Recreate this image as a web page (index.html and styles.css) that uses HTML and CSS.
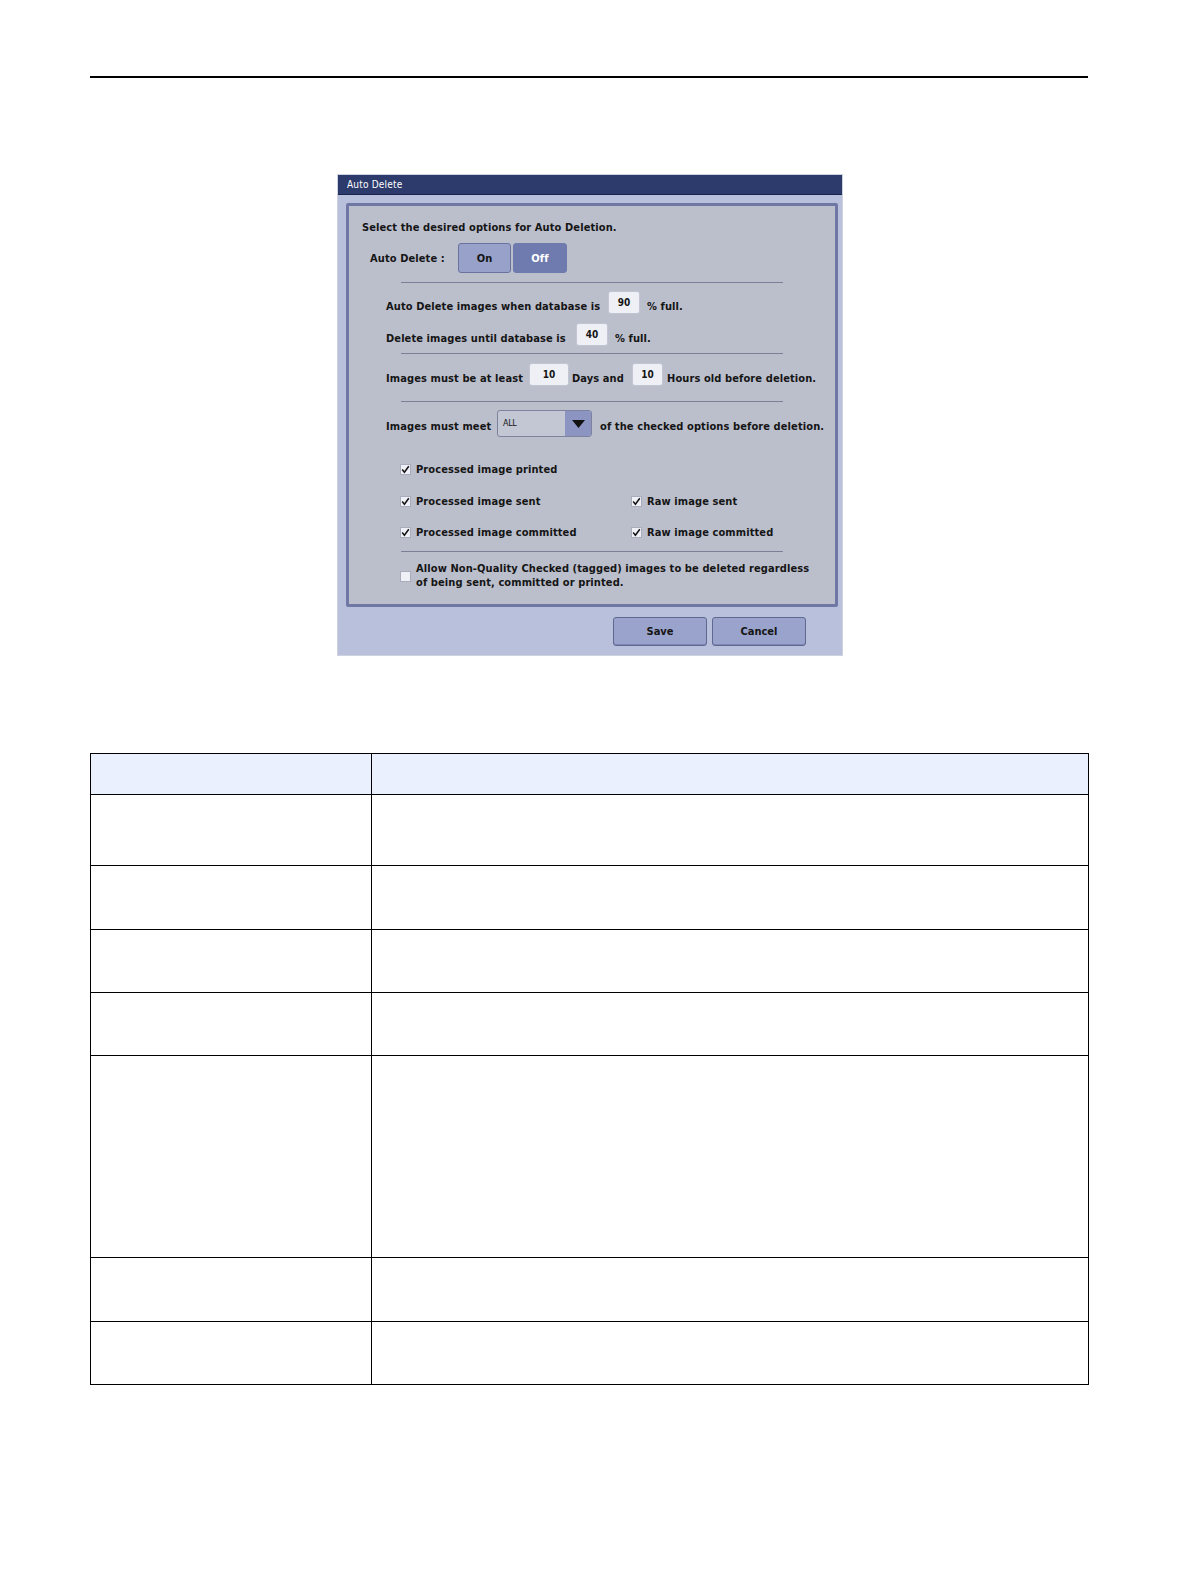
FILE: index.html
```html
<!DOCTYPE html>
<html>
<head>
<meta charset="utf-8">
<link rel="stylesheet" href="styles.css">
</head>
<body>
<div class="page">
  <div class="rule"></div>

  <div class="dialog">
    <div class="titlebar">Auto Delete</div>
    <div class="panel">
      <div class="row r-title"><span>Select the desired options for Auto Deletion.</span></div>
      <div class="row r-auto">
        <span class="lbl-auto">Auto Delete :</span>
        <div class="toggle">
          <span class="tbtn on">On</span>
          <span class="tbtn off">Off</span>
        </div>
      </div>
      <div class="sep s1"></div>
      <div class="row r-db1">
        <span class="lbl lbl-db1">Auto Delete images when database is</span>
        <span class="field f-db1">90</span>
        <span class="after">% full.</span>
      </div>
      <div class="row r-db2">
        <span class="lbl lbl-db2">Delete images until database is</span>
        <span class="field f-db2">40</span>
        <span class="after">% full.</span>
      </div>
      <div class="sep s2"></div>
      <div class="row r-age">
        <span class="lbl lbl-age">Images must be at least</span>
        <span class="field f-days">10</span>
        <span class="lbl lbl-days">Days and</span>
        <span class="field f-hours">10</span>
        <span class="after">Hours old before deletion.</span>
      </div>
      <div class="sep s3"></div>
      <div class="row r-meet">
        <span class="lbl lbl-meet">Images must meet</span>
        <span class="select"><span class="sel-val">ALL</span><span class="sel-arrow"><svg width="13" height="8" viewBox="0 0 13 8"><path d="M0 0H13L6.5 8Z" fill="#111"/></svg></span></span>
        <span class="after">of the checked options before deletion.</span>
      </div>
      <div class="row r-cb1">
        <span class="cbitem"><span class="cb"><svg width="9" height="9" viewBox="0 0 9 9"><path d="M1.2 4.6L3.4 7.2L7.8 1.2" fill="none" stroke="#111" stroke-width="1.5"/></svg></span>Processed image printed</span>
      </div>
      <div class="row r-cb2">
        <span class="cbitem c-left"><span class="cb"><svg width="9" height="9" viewBox="0 0 9 9"><path d="M1.2 4.6L3.4 7.2L7.8 1.2" fill="none" stroke="#111" stroke-width="1.5"/></svg></span>Processed image sent</span>
        <span class="cbitem"><span class="cb"><svg width="9" height="9" viewBox="0 0 9 9"><path d="M1.2 4.6L3.4 7.2L7.8 1.2" fill="none" stroke="#111" stroke-width="1.5"/></svg></span>Raw image sent</span>
      </div>
      <div class="row r-cb3">
        <span class="cbitem c-left"><span class="cb"><svg width="9" height="9" viewBox="0 0 9 9"><path d="M1.2 4.6L3.4 7.2L7.8 1.2" fill="none" stroke="#111" stroke-width="1.5"/></svg></span>Processed image committed</span>
        <span class="cbitem"><span class="cb"><svg width="9" height="9" viewBox="0 0 9 9"><path d="M1.2 4.6L3.4 7.2L7.8 1.2" fill="none" stroke="#111" stroke-width="1.5"/></svg></span>Raw image committed</span>
      </div>
      <div class="sep s4"></div>
      <div class="row r-allow">
        <span class="cb empty"></span>
        <span class="allow-text">Allow Non-Quality Checked (tagged) images to be deleted regardless<br>of being sent, committed or printed.</span>
      </div>
    </div>
    <div class="footer">
      <span class="btn">Save</span>
      <span class="btn">Cancel</span>
    </div>
  </div>

  <table class="grid">
    <tr class="head"><td class="c1"></td><td></td></tr>
    <tr class="h71"><td class="c1"></td><td></td></tr>
    <tr class="h64"><td class="c1"></td><td></td></tr>
    <tr class="h63"><td class="c1"></td><td></td></tr>
    <tr class="h63"><td class="c1"></td><td></td></tr>
    <tr class="h202"><td class="c1"></td><td></td></tr>
    <tr class="h64"><td class="c1"></td><td></td></tr>
    <tr class="h63"><td class="c1"></td><td></td></tr>
  </table>
</div>
</body>
</html>
```

FILE: styles.css
```css
html, body {
  margin: 0;
  padding: 0;
  background: #ffffff;
  overflow: hidden;
  width: 1190px;
  height: 1584px;
}

.page {
  width: 1190px;
  height: 1584px;
  box-sizing: border-box;
  overflow: hidden;
  padding-top: 76px;
  font-family: "DejaVu Sans Condensed", "DejaVu Sans", sans-serif;
  color: #151515;
}

.rule {
  margin-left: 90px;
  width: 998px;
  height: 2px;
  background: #000;
}

/* ---------- dialog ---------- */
.dialog {
  margin-top: 96px;
  margin-left: 337px;
  width: 506px;
  height: 482px;
  box-sizing: border-box;
  background: #b8c0dc;
  border: 1px solid #cfd3e0;
  display: flex;
  flex-direction: column;
}

.titlebar {
  height: 19px;
  background: #2c3a6c;
  border-bottom: 1px solid #1b2448;
  color: #ffffff;
  font-size: 10px;
  line-height: 19px;
  padding-left: 9px;
  letter-spacing: 0.2px;
}

.panel {
  margin-top: 8px;
  margin-left: 8px;
  width: 492px;
  height: 404px;
  box-sizing: border-box;
  border: 3px solid #6f78a4;
  border-radius: 2px;
  background: #bbbfcc;
  font-size: 11px;
  font-weight: bold;
  letter-spacing: 0.1px;
}

.row {
  display: flex;
  align-items: center;
  white-space: nowrap;
}

.r-title { height: 16px; margin-top: 13px; padding-left: 13px; }

.r-auto { height: 30px; margin-top: 8px; padding-left: 21px; }
.lbl-auto { width: 88px; }
.toggle { display: flex; gap: 2px; }
.tbtn {
  box-sizing: border-box;
  display: flex;
  align-items: center;
  justify-content: center;
  border-radius: 3px;
  font-size: 11px;
}
.tbtn.on {
  width: 53px;
  height: 30px;
  background: #97a1c9;
  border: 1px solid #6a739e;
}
.tbtn.off {
  width: 54px;
  height: 30px;
  background: #6f7bae;
  color: #ffffff;
  border: 1px solid #6f7bae;
}

.sep {
  height: 1px;
  margin-left: 52px;
  width: 382px;
  background: #7b8099;
}
.s1 { margin-top: 9px; }
.s2 { margin-top: 0; }
.s3 { margin-top: 8px; }
.s4 { margin-top: 11px; }

.field {
  height: 23px;
  box-sizing: border-box;
  background: #eef0f6;
  border: 1px solid #c2c6d3;
  border-radius: 3px;
  display: flex;
  align-items: center;
  justify-content: center;
  font-size: 10px;
  margin-bottom: 7px;
}

.r-db1 { height: 30px; margin-top: 8px; padding-left: 37px; }
.lbl-db1 { width: 222px; }
.f-db1 { width: 32px; margin-right: 7px; }

.r-db2 { height: 30px; margin-top: 2px; padding-left: 37px; }
.lbl-db2 { width: 190px; }
.f-db2 { width: 32px; margin-right: 7px; }

.r-age { height: 30px; margin-top: 9px; padding-left: 37px; }
.lbl-age { width: 143px; }
.f-days { width: 40px; margin-right: 3px; }
.lbl-days { width: 60px; }
.f-hours { width: 31px; margin-right: 4px; }

.r-meet { height: 32px; margin-top: 8px; padding-left: 37px; }
.lbl-meet { width: 111px; }
.select {
  width: 95px;
  height: 27px;
  box-sizing: border-box;
  margin-bottom: 5px;
  margin-right: 8px;
  display: flex;
  border: 1px solid #7d839f;
  border-radius: 3px;
  background: #c3c7d3;
  overflow: hidden;
}
.sel-val {
  flex: 1;
  display: flex;
  align-items: center;
  padding-left: 5px;
  font-size: 8px;
  font-family: "DejaVu Sans", sans-serif;
  font-weight: normal;
  letter-spacing: -0.3px;
}
.sel-arrow {
  width: 26px;
  background: #8c95c1;
  display: flex;
  align-items: center;
  justify-content: center;
}

.r-cb1 { height: 16px; margin-top: 19px; padding-left: 51px; }
.r-cb2 { height: 16px; margin-top: 16px; padding-left: 51px; }
.r-cb3 { height: 16px; margin-top: 15px; padding-left: 51px; }

.cbitem {
  display: flex;
  align-items: center;
}
.c-left { width: 231px; }

.cb {
  width: 11px;
  height: 11px;
  box-sizing: border-box;
  background: #eef0f6;
  border: 1px solid #a8acbb;
  margin-right: 5px;
  display: flex;
  align-items: center;
  justify-content: center;
}

.r-allow {
  margin-top: 10px;
  padding-left: 51px;
}
.allow-text {
  line-height: 14px;
}

.footer {
  display: flex;
  gap: 5px;
  margin-top: 10px;
  padding-left: 275px;
}
.btn {
  width: 94px;
  height: 29px;
  box-sizing: border-box;
  background: #9aa3cb;
  border: 1px solid #5f6891;
  border-radius: 3px;
  box-shadow: inset 0 -1px 0 #7f88b3;
  display: flex;
  align-items: center;
  justify-content: center;
  font-size: 11px;
  font-weight: bold;
}

/* ---------- table ---------- */
.grid {
  margin-top: 97px;
  margin-left: 90px;
  width: 999px;
  border-collapse: collapse;
  table-layout: fixed;
}
.grid td {
  border: 1px solid #000;
  padding: 0;
}
.grid td.c1 { width: 280px; }
.grid tr.head td { height: 40px; background: #ebf0fe; }
.grid tr.h71 td { height: 70px; }
.grid tr.h64 td { height: 63px; }
.grid tr.h63 td { height: 62px; }
.grid tr.h202 td { height: 201px; }
```
